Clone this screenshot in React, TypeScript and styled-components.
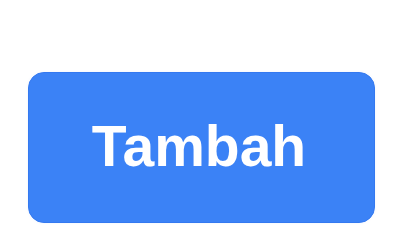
import * as React from "react";
import styled, { createGlobalStyle } from "styled-components";

const GlobalStyle = createGlobalStyle`
  html, body {
    margin: 0;
    padding: 0;
    background: #ffffff;
  }
`;

const Page = styled.div`
  width: 400px;
  height: 248px;
  box-sizing: border-box;
  padding: 72px 0 0 28px;
  display: flex;
  align-items: flex-start;
`;

const Button = styled.button`
  width: 347px;
  height: 151px;
  box-sizing: border-box;
  display: flex;
  align-items: center;
  justify-content: center;
  padding: 0 5px 4px 0;
  border: 1px solid #3479f0;
  border-radius: 16px;
  background: #3b82f6;
  color: #ffffff;
  font-family: "Liberation Sans", Arial, sans-serif;
  font-weight: 700;
  font-size: 57px;
  box-shadow: 0 0 3px rgba(59, 130, 246, 0.08);
  cursor: pointer;
`;

function App() {
  return (
    <>
      <GlobalStyle />
      <Page>
        <Button>Tambah</Button>
      </Page>
    </>
  );
}

export default App;
